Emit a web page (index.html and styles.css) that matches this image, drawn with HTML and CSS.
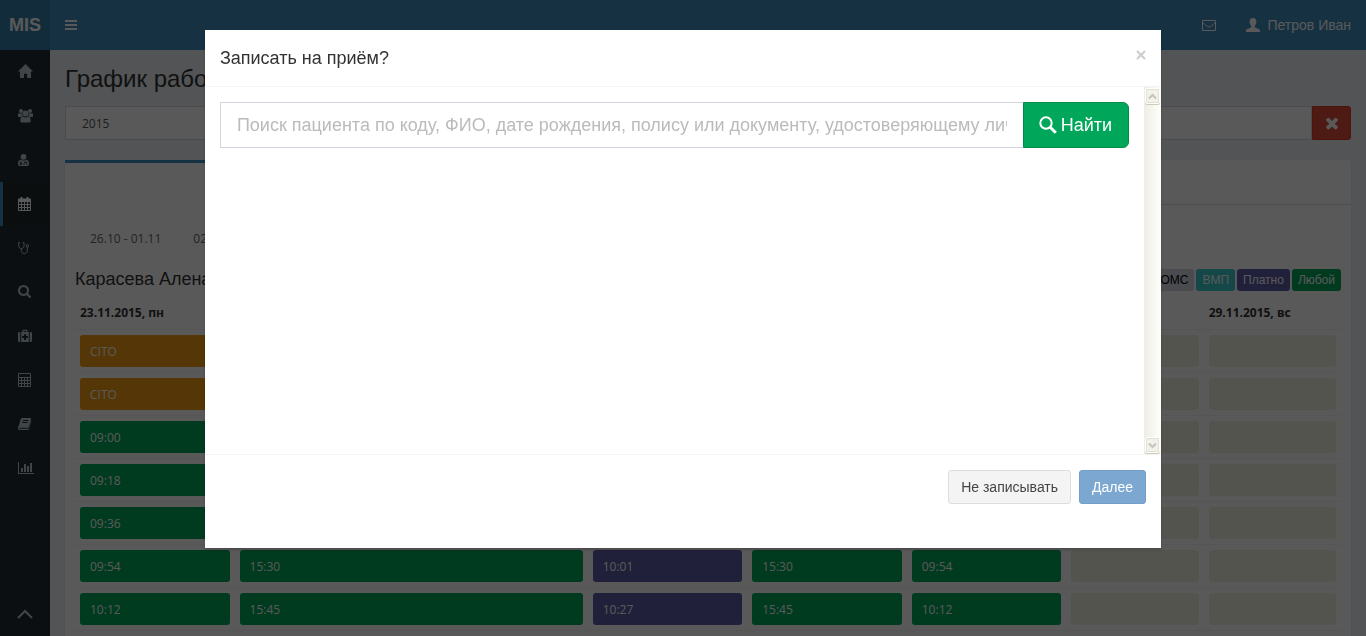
FILE: index.html
```html
<!DOCTYPE html>
<html lang="ru">
<head>
<meta charset="utf-8">
<title>MIS — График работы</title>
<link rel="stylesheet" href="styles.css">
</head>
<body>
<header class="topbar">
  <a class="brand" href="#">MIS</a>
  <button class="menu-toggle" type="button" aria-label="Меню">
    <svg width="12" height="12" viewBox="0 0 12 12"><path d="M0 1h12v2H0zM0 5h12v2H0zM0 9h12v2H0z"/></svg>
  </button>
  <nav class="top-links">
    <a href="#" aria-label="Сообщения"><svg width="14" height="14" viewBox="0 0 14 14"><path class="line" d="M.5 2.500h13v10H.5zM.8 4.600C3 6.800 5.600 9 7 9s4-2.200 6.200-4.400"/></svg></a>
    <a class="account" href="#"><svg width="14" height="14" viewBox="0 0 14 14"><path d="M7 0c2.300 0 3.600 1.500 3.400 4-.2 2-.8 3-1.600 3.800v1.700c1.600.9 5.200 1.300 5.200 3.300V14H0v-1.200c0-2 3.600-2.400 5.200-3.300V7.800C4.400 7 3.800 6 3.600 4 3.400 1.500 4.700 0 7 0z"/></svg><span>Петров Иван</span></a>
  </nav>
</header>

<div class="shell">
  <nav class="sidebar" aria-label="Разделы">
    <a href="#" aria-label="Главная"><svg width="16" height="16" viewBox="0 0 16 16"><path d="M7.500 0 15 7.600h-2V14H9.200v-4.200H6V14H2V7.600H0z"/></svg></a>
    <a href="#" aria-label="Пациенты"><svg width="16" height="16" viewBox="0 0 16 16"><circle cx="3" cy="3" r="2"/><circle cx="12" cy="3" r="2"/><circle cx="7.500" cy="5.500" r="3"/><path d="M0 8.500V6.400C0 5.300.8 5 1.600 5.200c1 .5 1.800.4 2.300.1 0 1.200.4 2.200 1 2.900C4 8.200 3.300 8.400 2.700 9H1C.4 9 0 8.900 0 8.500zM15 8.500V6.400c0-1.100-.8-1.400-1.600-1.200-1 .5-1.800.4-2.300.1 0 1.200-.4 2.200-1 2.900.9 0 1.600.2 2.200.8H14c.6 0 1-.1 1-.5zM2.300 13c0-2.500.6-4.400 2.700-4.400 1.500 1.200 3.500 1.200 5 0 2.100 0 2.700 1.900 2.700 4.400 0 .8-.7 1.400-1.500 1.400H3.800c-.8 0-1.500-.6-1.500-1.400z"/></svg></a>
    <a href="#" aria-label="Врачи"><svg width="16" height="16" viewBox="0 0 16 16"><circle cx="5.500" cy="4.800" r="2.900"/><path fill-rule="evenodd" d="M2.800 7.700C.6 8 0 9.800 0 12c0 1.400.8 2 2 2h7c1.200 0 2-.6 2-2 0-2.200-.6-4-2.800-4.300-1.700 1-3.700 1-5.400 0zM2.500 9.200h.9v1.600a1.100 1.100 0 1 1-.9 0zM7 8.800h.9v.9c1 .2 1.500.8 1.500 1.800v1.200h-.9v-1.200c0-1.200-2-1.200-2 0v1.200h-.9v-1.200c0-1 .5-1.600 1.400-1.800z"/></svg></a>
    <a class="active" href="#" aria-label="График работы"><svg width="16" height="16" viewBox="0 0 16 16"><path class="line" d="M.5 3h12v11.500H.5zM.5 5.500h12M.5 8.500h12M.5 11.500h12M3.500 5.500v9M6.500 5.500v9M9.500 5.500v9"/><path d="M0 3h13v2H0zM2.500 1h2v3h-2zM8.500 1h2v3h-2z"/></svg></a>
    <a href="#" aria-label="Осмотры"><svg width="16" height="16" viewBox="0 0 16 16"><path class="line" d="M2 2.500H.7v3c0 2 1 3 2.600 3s2.700-1 2.700-3v-3H4.700M3.300 8.500v1.900c0 2 1.200 3.100 3 3.100 1.900 0 3-1.100 3-3V7.300"/><circle class="line" cx="9.300" cy="5.900" r="1.300"/></svg></a>
    <a href="#" aria-label="Поиск"><svg width="16" height="16" viewBox="64 0 2048 2048"><path d="M1216 832q0-185-131.500-316.500T768 384 451.500 515.500 320 832t131.500 316.500T768 1280t316.500-131.500T1216 832zm512 832q0 52-38 90t-90 38q-54 0-90-38l-343-342q-179 124-399 124-143 0-273.500-55.500t-225-150-150-225T64 832t55.500-273.500 150-225 225-150T768 128t273.500 55.500 225 150 150 225T1472 832q0 220-124 399l343 343q37 37 37 90z"/></svg></a>
    <a href="#" aria-label="Помощь"><svg width="16" height="16" viewBox="0 0 16 16"><path fill-rule="evenodd" d="M4.500 4V2.600c0-.5.4-.8.8-.8h3.400c.4 0 .8.3.8.8V4h1.300v10H3.200V4zM5.700 4h2.600V3H5.700zM6 6.200v1.900H4.100V10H6v1.900h2V10h1.900V8.100H8V6.200zM2.200 4v10h-.7C.6 14 0 13.400 0 12.500v-7C0 4.600.6 4 1.500 4zM11.800 4v10h.7c.9 0 1.500-.6 1.500-1.500v-7c0-.9-.6-1.500-1.500-1.500z"/></svg></a>
    <a href="#" aria-label="Расчёты"><svg width="16" height="16" viewBox="0 0 16 16"><path class="line" d="M.5 1.500h12v13H.5zM.5 5.500h12M.5 8.500h12M.5 11.500h12M3.500 5.500v9M6.500 5.500v9M9.500 5.500v9"/></svg></a>
    <a href="#" aria-label="Справочники"><svg width="16" height="16" viewBox="0 0 16 16"><path fill-rule="evenodd" d="M4.300 2h7.900c.7 0 1 .5.800 1.200l-2.300 7.600c-.2.700-.7 1-1.400 1H1.700c-.6 0-.6.900.1.900h8.100c.4 0 .7-.2.800-.6L13 4.600c.3.300.3.700.2 1.100l-2.300 7.300c-.2.700-.8 1-1.500 1H1.500C.4 14-.3 12.800.1 11.700L2.700 3.400C3 2.500 3.500 2 4.300 2zM5 4l-.3.900h5.600l.3-.9zM4.300 6l-.3.900h5.600l.3-.9z"/></svg></a>
    <a href="#" aria-label="Отчёты"><svg width="16" height="16" viewBox="0 0 16 16"><path d="M0 2h1v11h15v1H0zM3 8h2v4H3zM6 4h2v8H6zM9 6h2v6H9zM12 3h2v9h-2z"/></svg></a>
    <a class="to-top" href="#" aria-label="Наверх"><svg width="16" height="16" viewBox="0 0 16 16"><path class="thick" d="m1 12 7-7 7 7"/></svg></a>
  </nav>

  <main class="content">
    <h1>График работы</h1>
    <div class="filter">
      <input type="text" value="2015" aria-label="Период">
      <button type="button" aria-label="Очистить"><svg width="18" height="18" viewBox="0 0 1792 1792"><path d="M1490 1322q0 40-28 68l-136 136q-28 28-68 28t-68-28l-294-294-294 294q-28 28-68 28t-68-28l-136-136q-28-28-28-68t28-68l294-294-294-294q-28-28-28-68t28-68l136-136q28-28 68-28t68 28l294 294 294-294q28-28 68-28t68 28l136 136q28 28 28 68t-28 68l-294 294 294 294q28 28 28 68z"/></svg></button>
    </div>
    <section class="box">
      <div class="tabs"><div class="tab"></div></div>
      <div class="panel">
        <nav class="weeks"><a href="#">26.10 - 01.11</a><a href="#">02.11 - 08.11</a></nav>
        <div class="doctor">
          <h2>Карасева Алена</h2>
          <div class="legend"><span class="oms">ОМС</span><span class="vmp">ВМП</span><span class="paid">Платно</span><span class="any">Любой</span></div>
        </div>
        <table>
          <colgroup><col class="day"><col class="wide"><col class="day"><col class="day"><col class="day"><col class="off"><col class="off"></colgroup>
          <thead><tr><th>23.11.2015, пн</th><th>24.11.2015, вт</th><th>25.11.2015, ср</th><th>26.11.2015, чт</th><th>27.11.2015, пт</th><th>28.11.2015, сб</th><th>29.11.2015, вс</th></tr></thead>
          <tbody>
            <tr><td><a class="slot cito" href="#">CITO</a></td><td></td><td></td><td></td><td></td><td><div class="slot"></div></td><td><div class="slot"></div></td></tr>
            <tr><td><a class="slot cito" href="#">CITO</a></td><td></td><td></td><td></td><td></td><td><div class="slot"></div></td><td><div class="slot"></div></td></tr>
            <tr><td><a class="slot any" href="#">09:00</a></td><td></td><td></td><td></td><td></td><td><div class="slot"></div></td><td><div class="slot"></div></td></tr>
            <tr><td><a class="slot any" href="#">09:18</a></td><td></td><td></td><td></td><td></td><td><div class="slot"></div></td><td><div class="slot"></div></td></tr>
            <tr><td><a class="slot any" href="#">09:36</a></td><td></td><td></td><td></td><td></td><td><div class="slot"></div></td><td><div class="slot"></div></td></tr>
            <tr><td><a class="slot any" href="#">09:54</a></td><td><a class="slot any" href="#">15:30</a></td><td><a class="slot paid" href="#">10:01</a></td><td><a class="slot any" href="#">15:30</a></td><td><a class="slot any" href="#">09:54</a></td><td><div class="slot"></div></td><td><div class="slot"></div></td></tr>
            <tr><td><a class="slot any" href="#">10:12</a></td><td><a class="slot any" href="#">15:45</a></td><td><a class="slot paid" href="#">10:27</a></td><td><a class="slot any" href="#">15:45</a></td><td><a class="slot any" href="#">10:12</a></td><td><div class="slot"></div></td><td><div class="slot"></div></td></tr>
          </tbody>
        </table>
      </div>
    </section>
  </main>
</div>

<div class="backdrop">
  <div class="modal" role="dialog" aria-modal="true" aria-labelledby="modal-title">
    <div class="modal-header">
      <h2 id="modal-title">Записать на приём?</h2>
      <button class="close" type="button" aria-label="Закрыть"><svg width="10" height="10" viewBox="0 0 10 10"><path d="m1 1 8 8M9 1 1 9"/></svg></button>
    </div>
    <div class="modal-body">
      <form class="search">
        <input type="text" aria-label="Поиск пациента" placeholder="Поиск пациента по коду, ФИО, дате рождения, полису или документу, удостоверяющему личность">
        <button type="button"><svg width="18" height="18" viewBox="0 0 18 18"><circle cx="7" cy="7" r="5.700"/><path class="handle" d="m11 11 5.800 5.800"/></svg><span>Найти</span></button>
      </form>
      <div class="scrollbar" aria-hidden="true">
        <span><svg width="9" height="7" viewBox="0 0 9 7"><path d="m1 5.500 3.500-3.500L8 5.500"/></svg></span>
        <span><svg width="9" height="7" viewBox="0 0 9 7"><path d="m1 1.500 3.500 3.500L8 1.500"/></svg></span>
      </div>
    </div>
    <div class="modal-footer">
      <button class="btn-default" type="button">Не записывать</button>
      <button class="btn-primary" type="button">Далее</button>
    </div>
  </div>
</div>
</body>
</html>
```
FILE: styles.css
```css
* { box-sizing: border-box; }
body {
  margin: 0;
  height: 100vh;
  overflow: hidden;
  display: flex;
  flex-direction: column;
  font: 14px/20px "Liberation Sans", Arial, sans-serif;
  color: #333;
  background: #ecf0f5;
}
h1, h2 { margin: 0; font-weight: 400; }
a { color: inherit; text-decoration: none; }
button, input { font: inherit; margin: 0; }
button { cursor: pointer; }
svg { display: block; flex: none; fill: currentColor; }
.line { fill: none; stroke: currentColor; stroke-width: 1; }
.thick { fill: none; stroke: currentColor; stroke-width: 2; }

.topbar {
  flex: none;
  display: flex;
  align-items: center;
  height: 50px;
  color: #fff;
  background: #3c8dbc;
}
.brand {
  width: 50px;
  font-size: 18px;
  font-weight: 700;
  line-height: 50px;
  text-align: center;
  background: #367fa9;
}
.menu-toggle { padding: 15px; border: 0; color: inherit; background: none; }
.top-links { display: flex; align-items: center; gap: 30px; margin-left: auto; padding-right: 15px; }
.account { display: flex; align-items: center; gap: 7px; }

.shell { flex: 1; min-height: 0; display: flex; }
.sidebar {
  flex: none;
  display: flex;
  flex-direction: column;
  width: 50px;
  color: #b8c7ce;
  background: #222d32;
}
.sidebar a { padding: 14px 15px; border-left: 3px solid transparent; }
.sidebar .active { color: #fff; background: #1e282c; border-color: #3c8dbc; }
.sidebar .to-top { margin-top: auto; padding: 14px; }

.content { flex: 1; min-width: 0; padding: 15px; }
h1 { padding-top: 1px; font-size: 24px; line-height: 26px; }
.filter { display: flex; margin: 14px 0 20px; height: 34px; }
.filter input {
  flex: 1;
  min-width: 0;
  padding: 7px 16px 5px;
  border: 1px solid #d2d6de;
  color: #555;
  background: #fff;
  font: 12px/20px "Open Sans", sans-serif;
}
.filter button {
  display: grid;
  place-items: center;
  width: 39px;
  padding: 0;
  border: 1px solid #d73925;
  border-radius: 0 3px 3px 0;
  color: #fff;
  background: #dd4b39;
}
.box { border-radius: 3px; background: #fff; box-shadow: 0 1px 1px rgba(0, 0, 0, .1); }
.tabs { border-bottom: 1px solid #ddd; }
.tab { width: 25%; height: 45px; border-top: 3px solid #3c8dbc; background: #fff; margin-bottom: -1px; }
.panel { padding: 17px 10px 10px; }
.weeks { display: flex; font: 12px/20px "Open Sans", sans-serif; color: #666; }
.weeks a { padding: 7px 16px; }
.weeks a:first-child { padding-left: 15px; }
.doctor { display: flex; align-items: center; justify-content: space-between; padding: 10px 0 11px; }
h2 { font-size: 18px; line-height: 26px; }
.legend { display: flex; gap: 2px; padding-top: 2px; font-size: 12px; line-height: 20px; color: #fff; }
.legend span { padding: 1px 6px; border-radius: 3px; }
.oms { background: #d2d6de; color: #000; }
.vmp { background: #39cccc; }
.paid { background: #605ca8; }
.any { background: #00a65a; }
.cito { background: #f39c12; }

table { width: 100%; table-layout: fixed; border-collapse: collapse; }
.day { width: 12.6%; }
.wide { width: 27.9%; }
th { padding: 0 5px 6px; text-align: left; font: 700 12px/20px "Open Sans", sans-serif; }
td { height: 43px; padding: 5px; border-top: 1px solid #f4f4f4; border-bottom: 1px solid #f4f4f4; }
.slot {
  display: block;
  height: 32px;
  padding: 7px 10px 5px;
  border-radius: 3px;
  color: #fff;
  font: 12px/20px "Open Sans", sans-serif;
}
div.slot { background: #f0f0e2; }

.backdrop {
  position: fixed;
  inset: 0;
  padding-top: 30px;
  background: rgba(0, 0, 0, .65);
}
.modal { width: 70%; margin: 0 auto; background: #fff; box-shadow: 0 2px 3px rgba(0, 0, 0, .2); }
.modal-header {
  display: flex;
  justify-content: space-between;
  align-items: flex-start;
  padding: 15px;
  border-bottom: 1px solid #f4f4f4;
}
.close { padding: 5px 0; border: 0; color: #ccc; background: none; }
.close path { fill: none; stroke: currentColor; stroke-width: 2; }
.modal-body { display: flex; height: calc(100vh - 269px); }
.search { flex: 1; min-width: 0; display: flex; align-items: flex-start; padding: 15px; }
.search input, .search button { height: 46px; font-size: 18px; line-height: 24px; }
.search input { flex: 1; min-width: 0; padding: 10px 16px; border: 1px solid #d2d6de; border-right: 0; background: #fff; }
.search input::placeholder { color: #bbb; opacity: 1; }
.search button {
  display: flex;
  align-items: center;
  gap: 4px;
  padding: 0 16px 0 15px;
  border: 1px solid #008d4c;
  border-radius: 0 6px 6px 0;
  color: #fff;
  background: #00a65a;
}
.search svg { fill: none; stroke: currentColor; stroke-width: 2; }
.search .handle { stroke-width: 3; }
.scrollbar {
  display: flex;
  flex-direction: column;
  justify-content: space-between;
  width: 17px;
  padding: 1px;
  background: linear-gradient(90deg, #eeede5, #fefefb);
}
.scrollbar span {
  display: grid;
  place-items: center;
  height: 16px;
  border: 1px solid #fff;
  border-radius: 2px;
  outline: 1px solid #e2e0d5;
  outline-offset: -2px;
  background: #f2f1ea;
  box-shadow: 0 1px 0 #cfcdb9;
}
.scrollbar svg { fill: none; stroke: #c5c4bb; stroke-width: 2; }
.modal-footer {
  display: flex;
  justify-content: flex-end;
  gap: 8px;
  padding: 15px 15px 44px;
  border-top: 1px solid #f4f4f4;
}
.modal-footer button { padding: 6px 12px; border: 1px solid #ddd; border-radius: 3px; color: #444; background: #f4f4f4; }
.modal-footer .btn-primary { color: #fff; background: #7ba7d1; border-color: #729fc9; }
```
